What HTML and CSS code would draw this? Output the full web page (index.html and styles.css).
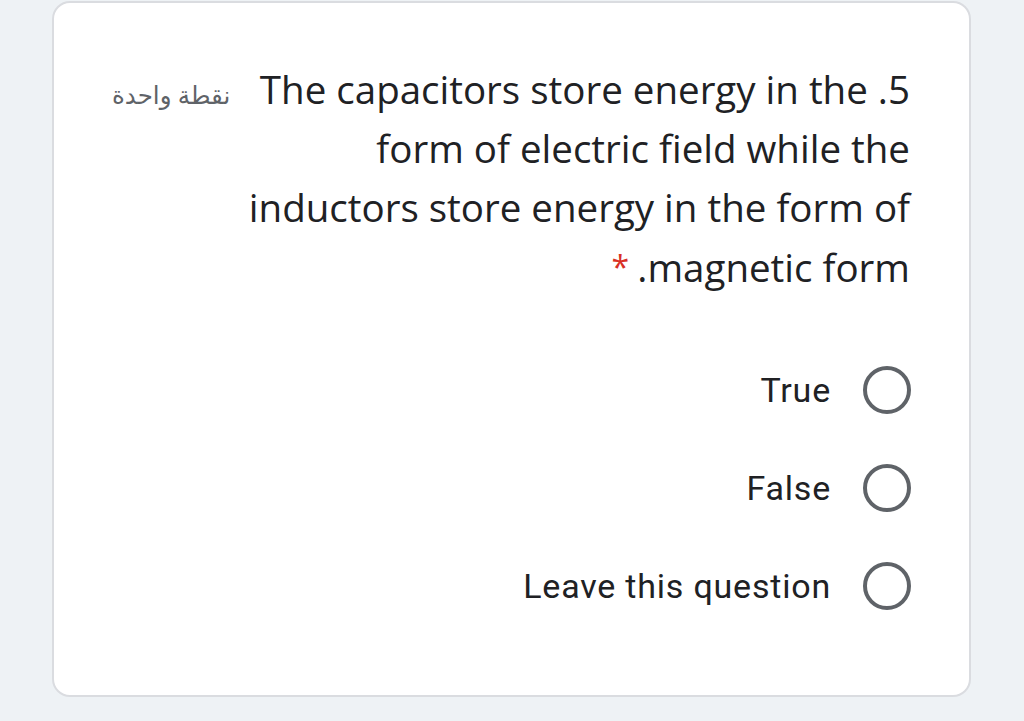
FILE: index.html
```html
<!DOCTYPE html>
<html lang="ar" dir="rtl">
<head>
<meta charset="utf-8">
<title>Question</title>
<link rel="stylesheet" href="styles.css">
</head>
<body>
<div class="card">
  <div class="header">
    <div class="title">5. The capacitors store energy in the<br>form of electric field while the<br>inductors store energy in the form of<br>magnetic form.<span class="req"> *</span></div>
    <div class="points">نقطة واحدة</div>
  </div>
  <div class="options">
    <label class="option"><span class="radio"></span><span class="label">True</span></label>
    <label class="option"><span class="radio"></span><span class="label">False</span></label>
    <label class="option"><span class="radio"></span><span class="label">Leave this question</span></label>
  </div>
</div>
</body>
</html>
```
FILE: styles.css
```css
html, body {
  margin: 0;
  padding: 0;
}
body {
  background: #eef2f5;
  width: 1024px;
  height: 721px;
  overflow: hidden;
}
.card {
  box-sizing: border-box;
  margin: 1px 53px 0 52px;
  height: 696px;
  background: #ffffff;
  border: 2px solid #dadce0;
  border-radius: 18px;
  padding: 57px 59px 0 58px;
  direction: rtl;
}
.header {
  display: flex;
  align-items: baseline;
  gap: 10px;
}
.title {
  flex: 1;
  font-family: "Open Sans", sans-serif;
  font-size: 38.5px;
  line-height: 59px;
  color: #202124;
  text-align: right;
  white-space: nowrap;
}
.req {
  color: #d93025;
  font-size: 32px;
  vertical-align: 3px;
}
.points {
  font-family: "Noto Sans", "DejaVu Sans", sans-serif;
  font-size: 24.5px;
  color: #5f6368;
  white-space: nowrap;
  flex: none;
}
.options {
  display: flex;
  flex-direction: column;
  margin-top: 44px;
}
.option {
  display: flex;
  align-items: center;
  height: 98px;
  gap: 32px;
  margin-right: -1px;
}
.radio {
  box-sizing: border-box;
  width: 48px;
  height: 48px;
  border: 4px solid #5f6368;
  border-radius: 50%;
  flex: none;
}
.label {
  font-family: Roboto, sans-serif;
  font-size: 34px;
  letter-spacing: 0.8px;
  color: #202124;
}
```
